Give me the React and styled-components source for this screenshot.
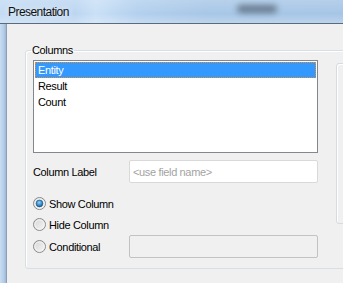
import React from 'react'
import styled, { createGlobalStyle } from 'styled-components'

const columns = ['Entity', 'Result', 'Count']

const GlobalStyle = createGlobalStyle`
  html, body {
    margin: 0;
    padding: 0;
    background: #f0f0f0;
    overflow: hidden;
  }
  body {
    font-family: "Liberation Sans", Arial, sans-serif;
    font-size: 11px;
    letter-spacing: -0.35px;
    color: #000;
  }
`

const RadioIcon = ({ checked }) => (
    <svg width="13" height="13" viewBox="0 0 13 13">
        <defs>
            <linearGradient id="rb-bg" x1="0" y1="0" x2="1" y2="1">
                <stop offset="0" stopColor="#d4d4d4" />
                <stop offset="1" stopColor="#f8f8f8" />
            </linearGradient>
            <radialGradient id="rb-dot" cx="0.45" cy="0.35" r="0.7">
                <stop offset="0" stopColor="#8fd3ff" />
                <stop offset="0.55" stopColor="#3a8fd0" />
                <stop offset="1" stopColor="#144f80" />
            </radialGradient>
        </defs>
        <circle cx="6.5" cy="6.5" r="6" fill="url(#rb-bg)" stroke="#8a8a8a" strokeWidth="1" />
        <circle cx="6.5" cy="6.5" r="4.6" fill="none" stroke="#f4f4f4" strokeWidth="1" />
        {checked && <circle cx="6.5" cy="6.5" r="3.4" fill="url(#rb-dot)" stroke="#1d4f78" strokeWidth="0.6" />}
    </svg>
)

const App = () => {
    return (
        <>
            <GlobalStyle />
            <Window>
                <TitleBar>
                    <Title>Presentation</Title>
                    <Smudge />
                </TitleBar>
                <Body>
                    <FrameEdge />
                    <Client>
                        <GroupBox>
                            <Legend>Columns</Legend>
                            <Row>
                                <Column>
                                    <ListBox>
                                        {columns.map((name, i) => (
                                            <ListItem key={name} selected={i === 0}>{name}</ListItem>
                                        ))}
                                    </ListBox>
                                    <FieldRow>
                                        <FieldLabel>Column Label</FieldLabel>
                                        <TextBox placeholder="<use field name>" />
                                    </FieldRow>
                                    <RadioGroup>
                                        <RadioRow>
                                            <RadioIcon checked />
                                            <RadioText>Show Column</RadioText>
                                        </RadioRow>
                                        <RadioRow>
                                            <RadioIcon />
                                            <RadioText>Hide Column</RadioText>
                                        </RadioRow>
                                        <RadioRow tall>
                                            <RadioIcon />
                                            <RadioText>Conditional</RadioText>
                                            <TextBox disabled />
                                        </RadioRow>
                                    </RadioGroup>
                                </Column>
                                <SidePanel />
                            </Row>
                        </GroupBox>
                    </Client>
                </Body>
            </Window>
        </>
    )
}

const Window = styled.div`
  width: 343px;
  height: 283px;
  display: flex;
  flex-direction: column;
  overflow: hidden;
`

const TitleBar = styled.div`
  height: 23px;
  flex: none;
  display: flex;
  align-items: center;
  padding-left: 8px;
  border-bottom: 1px solid #5a6b7c;
  background:
    linear-gradient(180deg, rgba(255, 255, 255, 0.18) 0%, rgba(255, 255, 255, 0) 60%, rgba(255, 255, 255, 0.25) 100%),
    linear-gradient(90deg, #c3dbf3 0%, #bcd6f1 22%, #c9e0f6 28%, #b3d0ee 40%, #a8c7e7 60%, #a6c5e6 100%);
`

const Title = styled.span`
  font-size: 12px;
  letter-spacing: -0.55px;
  color: #111;
  text-shadow: 0 0 6px rgba(255, 255, 255, 0.9);
`

const Smudge = styled.div`
  width: 40px;
  height: 8px;
  margin-left: 168px;
  margin-top: -6px;
  border-radius: 5px;
  background: #4a5866;
  opacity: 0.7;
  filter: blur(3px);
`

const Body = styled.div`
  flex: 1;
  display: flex;
  min-height: 0;
`

const FrameEdge = styled.div`
  width: 6px;
  flex: none;
  background: linear-gradient(90deg, #c9ddf2 0%, #b4cde8 60%, #9fb9d6 100%);
`

const Client = styled.div`
  flex: 1;
  border-left: 1px solid #8d9fb3;
  background: #f0f0f0;
  padding: 20px 0 0 18px;
  overflow: hidden;
`

const GroupBox = styled.fieldset`
  margin: 0;
  width: 340px;
  padding: 3px 0 10px 7px;
  border: 1px solid #d5dfe5;
  border-radius: 3px;
  box-shadow: inset 1px 1px 0 #fff;
`

const Legend = styled.legend`
  margin-left: -2px;
  padding: 0 1px;
  line-height: 13px;
`

const Row = styled.div`
  display: flex;
  gap: 18px;
  align-items: flex-start;
`

const Column = styled.div`
  width: 285px;
  display: flex;
  flex-direction: column;
`

const ListBox = styled.div`
  height: 93px;
  box-sizing: border-box;
  border: 1px solid #828790;
  background: #fff;
  padding: 1px;
`

const ListItem = styled.div`
  height: 16px;
  line-height: 16px;
  padding-left: 3px;
  background: ${(p) => (p.selected ? '#3399ff' : 'transparent')};
  color: ${(p) => (p.selected ? '#fff' : '#000')};
  outline: ${(p) => (p.selected ? '1px dotted #f08a24' : 'none')};
  outline-offset: -1px;
`

const FieldRow = styled.div`
  display: flex;
  align-items: center;
  margin-top: 7px;
`

const FieldLabel = styled.span`
  width: 96px;
`

const TextBox = styled.input`
  width: 189px;
  height: 23px;
  box-sizing: border-box;
  margin: 0 0 0 auto;
  padding: 0 3px;
  border: 1px solid ${(p) => (p.disabled ? '#c2c2c2' : '#d9d9d9')};
  border-radius: 2px;
  background: ${(p) => (p.disabled ? '#f0f0f0' : '#fff')};
  font: inherit;
  letter-spacing: inherit;
  outline: none;

  &::placeholder {
    color: #a3a3a3;
  }
`

const RadioGroup = styled.div`
  display: flex;
  flex-direction: column;
  margin-top: 10px;
`

const RadioRow = styled.div`
  display: flex;
  align-items: center;
  height: ${(p) => (p.tall ? '23px' : '21px')};

  svg {
    flex: none;
  }
`

const RadioText = styled.span`
  margin-left: 3px;
`

const SidePanel = styled.div`
  width: 30px;
  height: 161px;
  margin-top: 3px;
  box-sizing: border-box;
  border: 1px solid #d5dbe0;
  border-radius: 3px;
  box-shadow: inset 1px 1px 0 #fff;
`

export default App
